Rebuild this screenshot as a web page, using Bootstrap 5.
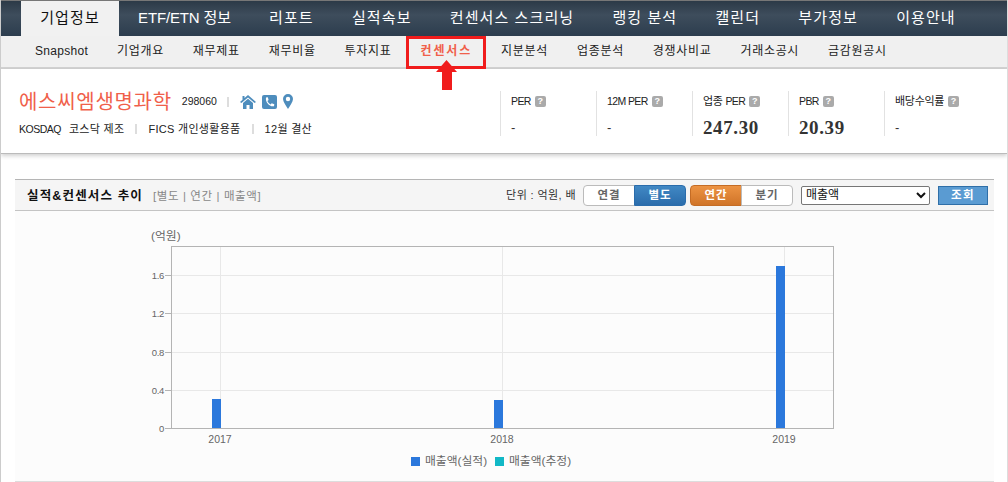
<!DOCTYPE html>
<html lang="ko">
<head>
<meta charset="utf-8">
<title>기업정보</title>
<link href="https://cdn.jsdelivr.net/npm/bootstrap@5.3.0/dist/css/bootstrap.min.css" rel="stylesheet">
<style>
html,body{height:482px;overflow:hidden}
body{font-family:"Liberation Sans","Noto Sans CJK KR",sans-serif;font-size:12px;color:#222;background:#fff;border-left:1px solid #ccc;border-right:1px solid #ddd;position:relative}
.top-bar{height:36px;background:linear-gradient(#2c3a47,#3e4d5c 40%,#2c3d4e);border-top:1px solid #777;padding-left:20px}
.top-item{padding:0 19.1px;color:#fff;font-size:15px;letter-spacing:1.1px;line-height:34px;text-decoration:none;white-space:nowrap}
.top-item.tight{letter-spacing:-.15px}
.top-item.on{background:#f1f1f1;color:#111;margin-top:0;height:35px;width:98px;padding:0;text-align:center}
.sub-bar{height:33px;background:#f0f0f0;border-bottom:2px solid #d2d2d2;padding-left:34px;gap:28.9px}
.sub-item{font-size:12px;letter-spacing:.7px;color:#222;line-height:31px;text-decoration:none;white-space:nowrap}
.sub-item.lat{letter-spacing:.3px}
.sub-item.on{color:#f0604a;font-weight:700;letter-spacing:1.9px}
.hl-box{position:absolute;left:405px;top:36px;width:80px;height:33px;border:3px solid #f01c1c}
.hl-arrow{position:absolute;left:435px;top:60px}
.co-head{height:85px;border-bottom:1px solid #bbb;box-shadow:0 2px 4px rgba(0,0,0,.18);padding:22px 0 0 18px}
.co-left{width:481px;margin-top:-2px}
.co-name{font-size:20px;letter-spacing:.7px;line-height:24px;color:#f0604a}
.co-code{font-size:10.5px;margin-left:10px;color:#222}
.sep{display:inline-block;width:2px;height:10px;background:#ddd}
.sep-a{margin:0 11px 0 10px}
.sep-b{margin:0 11px}
.ic-gap{margin-left:6px}
.co-l1{height:25px}
.co-l2{margin-top:7px;font-size:11px;letter-spacing:.3px;line-height:16px}
.tic{font-size:10.5px;letter-spacing:-.5px;margin-right:8px}
.stat{width:96px;height:45px;border-left:1px solid #e2e2e2;padding-left:10px;}
.stat-label{font-size:11px;line-height:14px;height:21px;padding-top:3px;letter-spacing:-.3px}
.lat-tx{font-size:10.5px;letter-spacing:-.6px}
.q{display:inline-block;width:11px;height:11px;background:#aaa;color:#fff;font-size:9px;line-height:11px;text-align:center;font-weight:700;border-radius:2px;margin-left:4px;vertical-align:1px;letter-spacing:0}
.stat-val{font-family:"Liberation Serif",serif;font-weight:700;font-size:19px;line-height:32px;color:#333;letter-spacing:.6px}
.stat-val.dash{font-family:"Liberation Sans",sans-serif;font-weight:400;font-size:13px}
.panel{margin:25px 13px 0 14px}
.panel-bar{height:32px;background:#f5f5f5;border-top:1px solid #b5b5b5;border-bottom:1px solid #c4c4c4;padding:0 6px 0 12px}
.panel-title{font-size:12.5px;font-weight:700;color:#111;letter-spacing:1.15px;line-height:30px;padding-top:1px}
.panel-sub{margin-left:10px;color:#888;font-size:11.5px;letter-spacing:.6px;padding-top:3px}
.unit{font-size:11px;margin-right:7px;color:#333;letter-spacing:.4px}
.seg{height:21px;width:52px;padding:0;font-size:11.5px;font-weight:700;letter-spacing:1px;line-height:18px;color:#666;background:#fff;border:1px solid #bbb;border-radius:0}
.seg.l{border-radius:4px 0 0 4px}
.seg.r{border-radius:0 4px 4px 0}
.seg.blue{background:linear-gradient(#4188c4,#2a6cab);border-color:#2a6cab;color:#fff}
.seg.org{background:linear-gradient(#ec9343,#d07428);border-color:#c46c25;color:#fff}
.pick{width:129px;height:19px;margin-left:8px;border:1px solid #767676;border-radius:2px;font-size:12px;padding:0;background:#fff;color:#111;font-family:inherit}
.go{width:50px;height:19px;margin-left:8px;padding:0;background:#5a9bd2;border:1px solid #2f6fa8;border-radius:0;color:#fff;font-size:11.5px;font-weight:700;letter-spacing:1.5px;line-height:16px}
.chart-wrap{height:271px;background:#fcfcfc;border-bottom:1px solid #ddd;padding-top:1px}
.chart-wrap svg{display:block;width:978px;height:269px}
.chart-wrap text{font-family:"Liberation Sans","Noto Sans CJK KR",sans-serif;font-size:10.5px;fill:#666}
.chart-wrap text.big{font-size:11.8px}
.chart-wrap text.ytk{font-size:9.5px;letter-spacing:-.3px}
</style>
</head>
<body>
<nav class="top-bar d-flex">
  <a class="top-item on" href="#">기업정보</a>
  <a class="top-item tight" href="#">ETF/ETN 정보</a>
  <a class="top-item" href="#">리포트</a>
  <a class="top-item" href="#">실적속보</a>
  <a class="top-item" href="#">컨센서스 스크리닝</a>
  <a class="top-item" href="#">랭킹 분석</a>
  <a class="top-item" href="#">캘린더</a>
  <a class="top-item" href="#">부가정보</a>
  <a class="top-item" href="#">이용안내</a>
</nav>
<nav class="sub-bar d-flex">
  <a class="sub-item lat" href="#">Snapshot</a>
  <a class="sub-item" href="#">기업개요</a>
  <a class="sub-item" href="#">재무제표</a>
  <a class="sub-item" href="#">재무비율</a>
  <a class="sub-item" href="#">투자지표</a>
  <a class="sub-item on" href="#">컨센서스</a>
  <a class="sub-item" href="#">지분분석</a>
  <a class="sub-item" href="#">업종분석</a>
  <a class="sub-item" href="#">경쟁사비교</a>
  <a class="sub-item" href="#">거래소공시</a>
  <a class="sub-item" href="#">금감원공시</a>
</nav>
<div class="hl-box"></div>
<svg class="hl-arrow" width="21" height="30" viewBox="0 0 21 30"><path d="M10.500 0 L21 12 H16 V30 H6 V12 H0 Z" fill="#f01c1c"/></svg>

<section class="co-head d-flex">
  <div class="co-left">
    <div class="co-l1 d-flex align-items-center">
      <span class="co-name">에스씨엠생명과학</span>
      <span class="co-code">298060</span>
      <span class="sep sep-a"></span>
      <svg width="16" height="14" viewBox="0 0 16 14"><path d="M8 0 L16 7 L14.600 8 L8 2.400 L1.400 8 L0 7 L2.500 4.800 V1 H4.500 V3 Z M3 8 L8 3.800 L13 8 V14 H9.500 V10 H6.500 V14 H3 Z" fill="#4e8dbd"/></svg>
      <svg class="ic-gap" width="15" height="14" viewBox="0 0 15 14"><rect width="15" height="14" rx="2" fill="#4e8dbd"/><path d="M4 2.500 L5.800 2.200 L6.600 5 L5.400 6 C6 7.600 7.200 8.800 8.600 9.400 L9.700 8.200 L12.300 9.200 L12 11.200 C8 12.200 3 7.500 4 2.500 Z" fill="#fff"/></svg>
      <svg class="ic-gap" width="10" height="15" viewBox="0 0 10 15"><path d="M5 0 A5 5 0 0 1 10 5 C10 8 7 11.500 5 15 C3 11.500 0 8 0 5 A5 5 0 0 1 5 0 Z M5 2.800 A2.200 2.200 0 1 0 5 7.200 A2.200 2.200 0 1 0 5 2.800 Z" fill="#4e8dbd" fill-rule="evenodd"/></svg>
    </div>
    <div class="co-l2 d-flex align-items-center">
      <span class="tic">KOSDAQ</span><span>코스닥 제조</span>
      <span class="sep sep-b"></span>
      <span>FICS 개인생활용품</span>
      <span class="sep sep-b"></span>
      <span>12월 결산</span>
    </div>
  </div>
  <div class="stat"><div class="stat-label"><span class="lat-tx">PER</span><span class="q">?</span></div><div class="stat-val dash">-</div></div>
  <div class="stat"><div class="stat-label"><span class="lat-tx">12M PER</span><span class="q">?</span></div><div class="stat-val dash">-</div></div>
  <div class="stat"><div class="stat-label">업종 <span class="lat-tx">PER</span><span class="q">?</span></div><div class="stat-val">247.30</div></div>
  <div class="stat"><div class="stat-label"><span class="lat-tx">PBR</span><span class="q">?</span></div><div class="stat-val">20.39</div></div>
  <div class="stat"><div class="stat-label">배당수익률<span class="q">?</span></div><div class="stat-val dash">-</div></div>
</section>

<section class="panel">
  <div class="panel-bar d-flex align-items-center">
    <span class="panel-title">실적&amp;컨센서스 추이</span>
    <span class="panel-sub">[별도 | 연간 | 매출액]</span>
    <div class="ms-auto d-flex align-items-center">
      <span class="unit">단위 : 억원, 배</span>
      <div class="btn-group">
        <button type="button" class="btn seg l">연결</button>
        <button type="button" class="btn seg r blue">별도</button>
      </div>
      <div class="btn-group ms-1">
        <button type="button" class="btn seg l org">연간</button>
        <button type="button" class="btn seg r">분기</button>
      </div>
      <select class="pick"><option>매출액</option></select>
      <button type="button" class="btn go">조회</button>
    </div>
  </div>
  <div class="chart-wrap">
    <svg viewBox="0 0 978 269" xmlns="http://www.w3.org/2000/svg">
      <g stroke="#e8e8e8" fill="none">
        <path d="M156.500 63.500H818.500M156.500 101.500H818.500M156.500 140.500H818.500M156.500 178.500H818.500"/>
        <path d="M205.500 34V216M487.500 34V216M769.500 34V216"/>
      </g>
      <rect x="156.500" y="34.500" width="662" height="182" fill="none" stroke="#b4b4b4"/>
      <path d="M150 63.500H156M150 101.500H156M150 140.500H156M150 178.500H156M150 216.500H156" stroke="#b4b4b4"/>
      <rect x="197" y="187" width="9" height="29" fill="#2b78dc"/>
      <rect x="479" y="188" width="9" height="28" fill="#2b78dc"/>
      <rect x="761" y="54" width="9" height="162" fill="#2b78dc"/>
      <text class="big" x="136" y="28">(억원)</text>
      <g text-anchor="end">
        <text class="ytk" x="149" y="67">1.6</text><text class="ytk" x="149" y="105">1.2</text><text class="ytk" x="149" y="144">0.8</text><text class="ytk" x="149" y="182">0.4</text><text class="ytk" x="149" y="220">0</text>
      </g>
      <g text-anchor="middle">
        <text x="205" y="231">2017</text><text x="487" y="231">2018</text><text x="769" y="231">2019</text>
      </g>
      <rect x="396" y="245" width="9" height="9" fill="#2b78dc"/>
      <text class="big" x="410" y="253">매출액(실적)</text>
      <rect x="480" y="245" width="9" height="9" fill="#12b8c6"/>
      <text class="big" x="494" y="253">매출액(추정)</text>
    </svg>
  </div>
</section>
<script src="https://cdn.jsdelivr.net/npm/bootstrap@5.3.0/dist/js/bootstrap.bundle.min.js"></script>
</body>
</html>
